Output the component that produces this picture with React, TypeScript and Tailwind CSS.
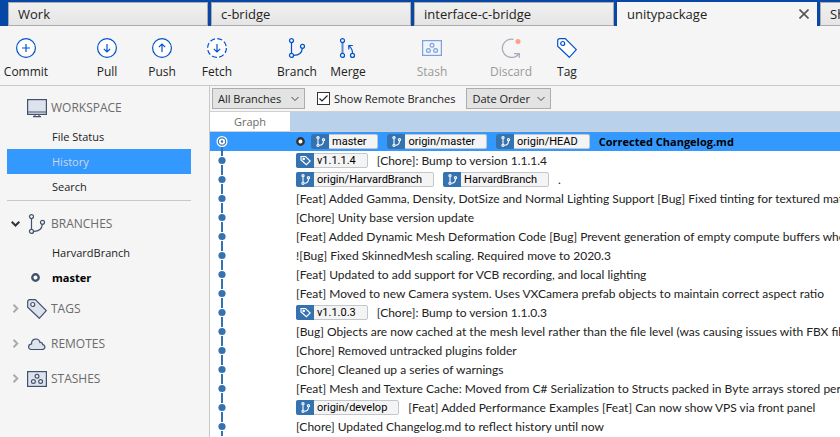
import React from "react";

type IconProps = { className?: string };

const svgBase = {
  width: 20,
  height: 20,
  viewBox: "0 0 20 20",
  fill: "none",
  stroke: "currentColor",
  "aria-hidden": true,
} as const;

function CircleIcon({ kind }: { kind: "plus" | "down" | "up" | "fetch" }) {
  return (
    <svg {...svgBase} strokeWidth="1.2">
      <circle
        cx="10"
        cy="10"
        r="9.4"
        fill="#ffffff"
        strokeDasharray={kind === "fetch" ? "5.1 2.28" : undefined}
      />
      {kind === "plus" && <path d="M10 6v8M6 10h8" />}
      {kind === "up" && <path d="M10 14V6M6.8 9.2 10 6l3.2 3.2" />}
      {(kind === "down" || kind === "fetch") && <path d="M10 6v8M6.8 10.8 10 14l3.2-3.2" />}
    </svg>
  );
}

function BranchIcon({ className }: IconProps) {
  return (
    <svg {...svgBase} className={className} strokeWidth="1.2">
      <path d="M4.5 4.8v10.4M6.8 17.4c4.6-.2 8.2-2.4 8.5-7" />
      <circle cx="4.5" cy="2.6" r="2" />
      <circle cx="4.5" cy="17.4" r="2" />
      <circle cx="15.5" cy="8.3" r="2" />
    </svg>
  );
}

function MergeIcon() {
  return (
    <svg {...svgBase} strokeWidth="1.2">
      <path d="M4.5 4.8v10.4" strokeWidth="2" opacity="0.65" />
      <circle cx="4.5" cy="2.6" r="2" />
      <circle cx="4.5" cy="17.4" r="2" />
      <circle cx="14.5" cy="17.4" r="2" />
      <path d="M14.5 15.2c0-3-1-5.3-3.3-7.3M10.8 11.4V7.5h4" />
    </svg>
  );
}

function StashIcon({ className, fill = "#dee2ec" }: IconProps & { fill?: string }) {
  return (
    <svg {...svgBase} className={className} strokeWidth="1.2">
      <rect x="0.6" y="2.6" width="18.8" height="14.8" fill={fill} />
      <circle cx="10" cy="7.3" r="1.9" fill="#f5f5f5" />
      <circle cx="6.4" cy="12.5" r="1.9" fill="#f5f5f5" />
      <circle cx="13.6" cy="12.5" r="1.9" fill="#f5f5f5" />
    </svg>
  );
}

function DiscardIcon() {
  return (
    <svg {...svgBase} strokeWidth="1.3">
      <path d="M12.5 1.3A9.2 9.2 0 1 0 17.8 16" />
      <path d="M13 15.6h5.3v4.2" />
      <circle cx="17" cy="3.6" r="2.5" fill="#ff9f8c" stroke="none" />
    </svg>
  );
}

function TagIcon({ className, fill = "#ffffff" }: IconProps & { fill?: string }) {
  return (
    <svg {...svgBase} className={className} strokeWidth="1.2">
      <path d="M.7 2.7C.7 1.5 1.5.7 2.7.7h5.6L19.3 11.7 12.3 19.3.7 8.3Z" fill={fill} />
      <circle cx="5.7" cy="5.5" r="2" fill="#f5f5f5" />
    </svg>
  );
}

function MonitorIcon({ className }: IconProps) {
  return (
    <svg {...svgBase} className={className} strokeWidth="1.2">
      <rect x="0.6" y="1.6" width="18.8" height="14.8" fill="#dee2ec" />
      <path d="M.6 14h18.8M8 16.5v2M12 16.5v2M6 18.6h8" />
    </svg>
  );
}

function CloudIcon({ className }: IconProps) {
  return (
    <svg {...svgBase} className={className} strokeWidth="1.2">
      <path
        d="M4.5 15.5C.5 15.5.7 10.4 4.6 9.9 4.2 3.9 11.8 3.4 13 8.5c1.7-.3 2.8.8 2.7 2.2 3.2.3 2.8 4.8-.7 4.8Z"
        fill="#dee2ec"
      />
    </svg>
  );
}

function Chevron({ open }: { open: boolean }) {
  return (
    <svg
      width="9"
      height="9"
      viewBox="0 0 9 9"
      fill="none"
      strokeWidth="2"
      aria-hidden
      className={open ? "stroke-[#333333]" : "stroke-[#ababab]"}
    >
      <path d={open ? "M.7 2.7 4.5 6.5 8.3 2.7" : "M2.5.7 6.3 4.5 2.5 8.3"} />
    </svg>
  );
}

function RingIcon({ className }: IconProps) {
  return (
    <svg width="9" height="9" viewBox="0 0 9 9" fill="#ffffff" strokeWidth="2.4" aria-hidden className={className}>
      <circle cx="4.5" cy="4.5" r="3.2" />
    </svg>
  );
}

const tabs = ["Work", "c-bridge", "interface-c-bridge", "unitypackage", "Shaders"];

function TabBar() {
  return (
    <nav className="flex h-[26px] gap-[3px] overflow-hidden bg-[#0747a6] pl-2 pt-0.5">
      {tabs.map((name) =>
        name === "unitypackage" ? (
          <div key={name} className="flex w-[200px] shrink-0 items-center justify-between bg-[#f5f5f5] pl-2.5 pr-2">
            <button className="text-[13px]">{name}</button>
            <button aria-label="Close tab">
              <svg width="10" height="10" viewBox="0 0 10 10" stroke="#555555" strokeWidth="1.6">
                <path d="M.5.5l9 9M9.5.5l-9 9" />
              </svg>
            </button>
          </div>
        ) : (
          <button
            key={name}
            className="w-[200px] shrink-0 border border-[#acacac] bg-linear-to-b from-[#f0f0f0] to-[#e5e5e5] pl-[9px] text-left text-[13px]"
          >
            {name}
          </button>
        ),
      )}
    </nav>
  );
}

type ToolProps = { label: string; icon: React.ReactNode; disabled?: boolean; className?: string };

function Tool({ label, icon, disabled, className }: ToolProps) {
  return (
    <button
      disabled={disabled}
      className={`flex w-12 shrink-0 flex-col items-center gap-1.5 text-[#0052cc] ${className ?? ""}`}
    >
      {icon}
      <span className={disabled ? "text-[#9a9a9a]" : "text-[#222222]"}>{label}</span>
    </button>
  );
}

function Toolbar() {
  return (
    <div className="flex h-[60px] border-b border-[#c8c8c8] pl-0.5 pt-3">
      <Tool label="Commit" icon={<CircleIcon kind="plus" />} />
      <div className="ml-[33px] flex gap-[7px]">
        <Tool label="Pull" icon={<CircleIcon kind="down" />} />
        <Tool label="Push" icon={<CircleIcon kind="up" />} />
        <Tool label="Fetch" icon={<CircleIcon kind="fetch" />} />
      </div>
      <div className="ml-8 flex gap-[3px]">
        <Tool label="Branch" icon={<BranchIcon />} />
        <Tool label="Merge" icon={<MergeIcon />} />
      </div>
      <Tool label="Stash" disabled className="ml-9" icon={<StashIcon className="opacity-50" fill="#f0f4fc" />} />
      <div className="ml-[31px] flex gap-2">
        <Tool label="Discard" disabled icon={<span className="text-[#a5adba]"><DiscardIcon /></span>} />
        <Tool label="Tag" icon={<TagIcon />} />
      </div>
    </div>
  );
}

function SectionHeading({ label, icon, open }: { label: string; icon: React.ReactNode; open?: boolean }) {
  return (
    <button className="flex h-[35px] w-full items-center pl-[11px] pt-0.5 text-left text-[12px] font-medium text-[#6b6b6b]">
      <span className="w-4">{open !== undefined && <Chevron open={open} />}</span>
      <span className="w-6 text-[#42526e]">{icon}</span>
      {label}
    </button>
  );
}

function SideItem({ label, selected, current }: { label: string; selected?: boolean; current?: boolean }) {
  return (
    <button
      className={`flex h-[25px] w-full items-center text-left text-[11px] ${
        selected ? "bg-[#3399ff] text-[#cfd8e6]" : current ? "font-bold text-black" : "text-[#222222]"
      }`}
    >
      <span className="flex w-[45px] pl-6">{current && <RingIcon className="stroke-[#42526e]" />}</span>
      {label}
    </button>
  );
}

function Sidebar() {
  return (
    <aside className="w-[210px] shrink-0 border-r border-[#c8c8c8] pt-[3px]">
      <SectionHeading label="WORKSPACE" icon={<MonitorIcon />} />
      <div className="ml-[7px] mr-[18px] border-b border-[#c8c8c8] pb-px">
        <SideItem label="File Status" />
        <SideItem label="History" selected />
        <SideItem label="Search" />
      </div>
      <div className="pt-1">
        <SectionHeading label="BRANCHES" icon={<BranchIcon />} open />
        <div className="ml-[7px] mr-[18px]">
          <SideItem label="HarvardBranch" />
          <SideItem label="master" current />
        </div>
        <SectionHeading label="TAGS" icon={<TagIcon fill="#dee2ec" />} open={false} />
        <SectionHeading label="REMOTES" icon={<CloudIcon />} open={false} />
        <SectionHeading label="STASHES" icon={<StashIcon />} open={false} />
      </div>
    </aside>
  );
}

function Dropdown({ id, label, value, className }: { id: string; label: string; value: string; className: string }) {
  return (
    <div className={`relative h-[21px] ${className}`}>
      <select
        id={id}
        aria-label={label}
        className="h-full w-full appearance-none border border-[#adadad] bg-[#e3e3e3] pl-[5px] text-[11px] text-[#222222]"
      >
        <option>{value}</option>
      </select>
      <svg
        className="pointer-events-none absolute right-1.5 top-2"
        width="8"
        height="6"
        viewBox="0 0 8 6"
        fill="none"
        stroke="#444444"
        aria-hidden
      >
        <path d="M.5 1 4 4.5 7.5 1" />
      </svg>
    </div>
  );
}

function FilterBar() {
  return (
    <div className="flex h-[26px] items-center border-b border-[#d0d0d0] pl-0.5">
      <Dropdown id="branches" label="Branches" value="All Branches" className="w-[93px]" />
      <label className="ml-3 flex items-center gap-1 text-[11px]">
        <span className="relative flex">
          <input
            type="checkbox"
            defaultChecked
            className="peer size-[13px] appearance-none border border-[#333333] bg-white"
          />
          <svg
            className="pointer-events-none absolute inset-0 hidden peer-checked:block"
            width="13"
            height="13"
            viewBox="0 0 13 13"
            fill="none"
            stroke="#222222"
            strokeWidth="1.2"
            aria-hidden
          >
            <path d="M2.5 6.5 5 9l5.5-5.5" />
          </svg>
        </span>
        Show Remote Branches
      </label>
      <Dropdown id="order" label="Sort order" value="Date Order" className="ml-[11px] w-[85px]" />
    </div>
  );
}

type Ref = { kind: "branch" | "tag"; name: string };
type Commit = { message: string; refs?: Ref[]; head?: boolean };

const b = (name: string): Ref => ({ kind: "branch", name });
const t = (name: string): Ref => ({ kind: "tag", name });

const commits: Commit[] = [
  { message: "Corrected Changelog.md", refs: [b("master"), b("origin/master"), b("origin/HEAD")], head: true },
  { message: "[Chore]: Bump to version 1.1.1.4", refs: [t("v1.1.1.4")] },
  { message: ".", refs: [b("origin/HarvardBranch"), b("HarvardBranch")] },
  { message: "[Feat] Added Gamma, Density, DotSize and Normal Lighting Support [Bug] Fixed tinting for textured materials" },
  { message: "[Chore] Unity base version update" },
  { message: "[Feat] Added Dynamic Mesh Deformation Code [Bug] Prevent generation of empty compute buffers when" },
  { message: "![Bug] Fixed SkinnedMesh scaling. Required move to 2020.3" },
  { message: "[Feat] Updated to add support for VCB recording, and local lighting" },
  { message: "[Feat] Moved to new Camera system. Uses VXCamera prefab objects to maintain correct aspect ratio" },
  { message: "[Chore]: Bump to version 1.1.0.3", refs: [t("v1.1.0.3")] },
  { message: "[Bug] Objects are now cached at the mesh level rather than the file level (was causing issues with FBX files" },
  { message: "[Chore] Removed untracked plugins folder" },
  { message: "[Chore] Cleaned up a series of warnings" },
  { message: "[Feat] Mesh and Texture Cache: Moved from C# Serialization to Structs packed in Byte arrays stored per" },
  { message: "[Feat] Added Performance Examples [Feat] Can now show VPS via front panel", refs: [b("origin/develop")] },
  { message: "[Chore] Updated Changelog.md to reflect history until now" },
];

function RefBadge({ kind, name }: Ref) {
  return (
    <span className="mr-[9px] inline-flex h-[15px] shrink-0 items-center rounded-xs border border-[#c3c7cc] bg-[#f4f4f4] pr-[11px] font-['Roboto',sans-serif] text-[11px] font-normal leading-none text-black">
      <span className="-my-px -ml-px mr-[3px] flex h-[15px] w-[18px] items-center justify-center rounded-l-xs bg-[#3572b0] text-white">
        {kind === "branch" ? (
          <svg width="11" height="11" viewBox="0 0 11 11" fill="none" stroke="currentColor" strokeWidth="1.1" aria-hidden>
            <path d="M3 2.8v5.4M4.3 9.3C7 9.2 8.5 7.5 8.5 4.8" />
            <circle cx="3" cy="1.7" r="1.1" />
            <circle cx="3" cy="9.3" r="1.1" />
            <circle cx="8.5" cy="3.7" r="1.1" />
          </svg>
        ) : (
          <svg width="11" height="11" viewBox="0 0 11 11" fill="none" stroke="currentColor" strokeWidth="1.2" aria-hidden>
            <path d="M1 1.5h4.5L10.2 6 6.4 9.7 1 5Z" />
            <circle cx="3.7" cy="3.9" r=".7" />
          </svg>
        )}
      </span>
      {name}
    </span>
  );
}

function GraphNode({ head }: { head?: boolean }) {
  return (
    <svg width="24" height="19" viewBox="0 0 24 19" className="block" aria-hidden>
      {head ? (
        <>
          <path d="M12 15v4" stroke="#3572b0" strokeWidth="2" />
          <circle cx="12" cy="9.5" r="4.9" fill="#3572b0" stroke="#ffffff" strokeWidth="1.2" />
          <circle cx="12" cy="9.5" r="2.2" fill="#3572b0" stroke="#ffffff" strokeWidth="1.8" />
        </>
      ) : (
        <>
          <path d="M12 0v5M12 14v5" stroke="#3572b0" strokeWidth="2" />
          <circle cx="12" cy="9.5" r="3.6" fill="#3572b0" />
        </>
      )}
    </svg>
  );
}

function CommitTable() {
  return (
    <table className="w-full table-fixed border-separate border-spacing-0 bg-white">
      <thead>
        <tr>
          <th className="h-5 w-20 border-b border-[#d0d0d0] p-0 text-center text-[11px] font-normal text-[#6b6b6b]">
            Graph
          </th>
          <th className="border-b border-[#d0d0d0] bg-[#b9d1ea]" aria-label="Description" />
        </tr>
      </thead>
      <tbody>
        {commits.map((c) => (
          <tr key={c.message} className={c.head ? "bg-[#3399ff] text-black" : ""}>
            <td className="p-0">
              <GraphNode head={c.head} />
            </td>
            <td className="p-0">
              <div className="flex h-[19px] items-center overflow-hidden whitespace-nowrap pl-1.5 leading-[19px]">
                {c.head && <RingIcon className="mr-1.5 shrink-0 stroke-[#333333]" />}
                {c.refs?.map((r) => <RefBadge key={r.name} {...r} />)}
                <span className={c.head ? "text-[11px] font-bold" : "font-['Lato',sans-serif]"}>{c.message}</span>
              </div>
            </td>
          </tr>
        ))}
      </tbody>
    </table>
  );
}

export default function App() {
  return (
    <div className="flex h-screen flex-col overflow-hidden bg-[#f5f5f5] font-['Open_Sans','Noto_Sans',sans-serif] text-[12px] leading-4 text-[#222222]">
      <TabBar />
      <Toolbar />
      <div className="flex min-h-0 flex-1">
        <Sidebar />
        <main className="min-w-0 flex-1 overflow-hidden bg-white">
          <div className="bg-[#f5f5f5]">
            <FilterBar />
          </div>
          <CommitTable />
        </main>
      </div>
    </div>
  );
}
